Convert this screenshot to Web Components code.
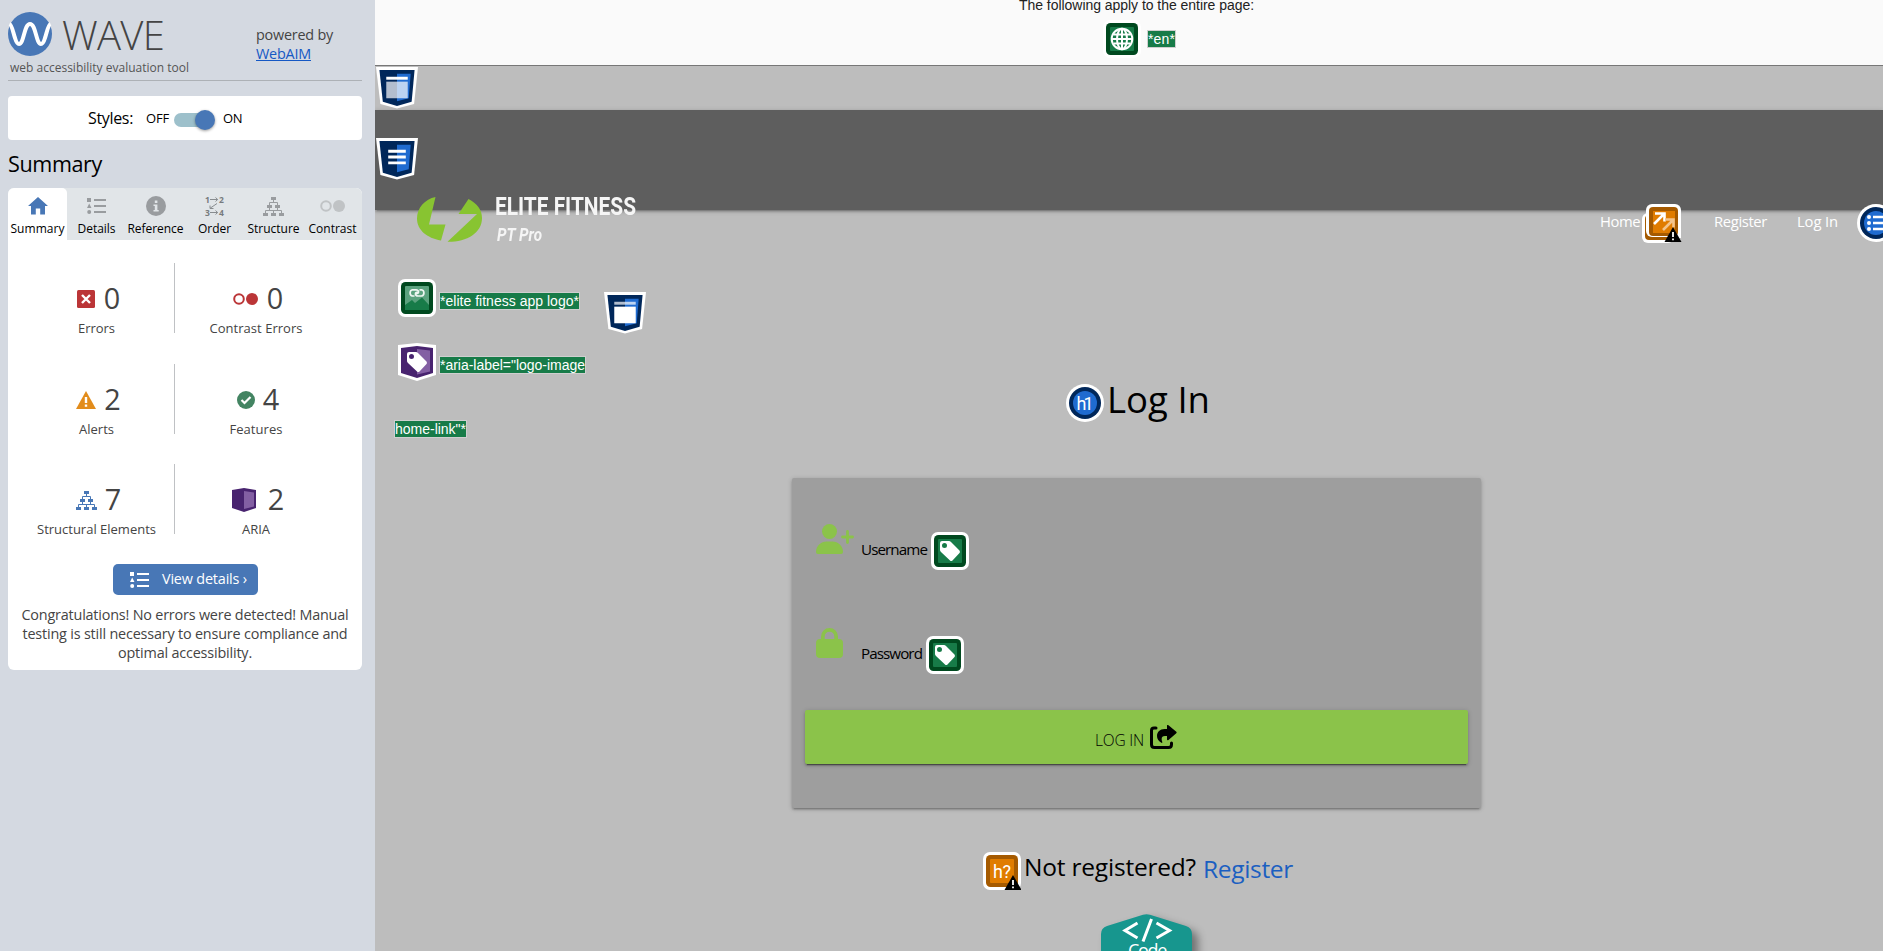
<!DOCTYPE html>
<html lang="en">
<head>
<meta charset="utf-8">
<title>WAVE Report</title>
<style>
html,body{margin:0;height:100%;overflow:hidden}
body{font-family:"Open Sans","Noto Sans",sans-serif;color:#000;background:#bdbdbd}
</style>
</head>
<body>
<wave-report></wave-report>
<script>
const define = (name, html) => customElements.define(name, class extends HTMLElement {
  constructor() {
    super();
    const t = document.createElement('template');
    t.innerHTML = html;
    this.attachShadow({mode: 'open'}).append(t.content.cloneNode(true));
  }
});

/* Icon set shared by the sidebar and the in-page markers */
const shield = inner => `<svg width="42" height="42" viewBox="0 0 43 43"><path fill="#fff" d="M0 0H43L39 38L21.5 42.5L4.500 38Z"/><path fill="#00275a" d="M3.500 3H39.500L36.500 35.500L21.500 40L7 35.500Z"/><path fill="#1f6bd0" d="M21.500 7H35.500L33.500 32L21.500 35Z"/>${inner}</svg>`;
const box = (dark, mid, inner) => `<svg width="38" height="38" viewBox="0 0 38 38"><rect width="38" height="38" rx="7" fill="#fff"/><rect x="3" y="3" width="32" height="32" rx="4.500" fill="${dark}"/><rect x="7" y="7" width="24" height="24" rx="1" fill="${mid}"/>${inner}</svg>`;
const tag = '<path fill="#fff" fill-rule="evenodd" d="M9 11Q9 9 11 9H18Q19 9 20 10L28.500 18.500Q29.500 20 28.500 21L21.500 28.500Q20 29.500 19 28.500L10 20Q9 19 9 18ZM13.500 11A2.500 2.500 0 1 0 13.500 16A2.500 2.500 0 1 0 13.500 11Z"/>';
const warn = '<path d="M30 23L38.500 38H21.500Z"/><path stroke="#fff" stroke-width="1.800" d="M30 28v5M30 34.500v1.800"/>';
const tree = c => `<svg width="21" height="19" viewBox="0 0 21 19"><path fill="${c}" d="M8 0h5v3H8zM4 8h5v3H4zM12 8h5v3h-5zM0 16h5v3H0zM8 16h5v3H8zM16 16h5v3h-5z"/><path stroke="${c}" fill="none" d="M10.500 3v3M6.500 8V5.500h8V8M6.500 11v2.500M14.500 11v2.500M2.500 16v-2.500h16V16M10.500 16v-2.500"/></svg>`;
const list = c => `<svg width="19" height="16" viewBox="0 0 19 16"><path fill="${c}" d="M0 0h4v4H0zM2.200 5.600l2.300 4.400H0zM7 1h12v2H7zM7 7h12v2H7zM7 13h12v2H7z"/><circle cx="2.200" cy="14" r="2" fill="${c}"/></svg>`;
const dots = c => `<svg width="25" height="12" viewBox="0 0 25 12"><circle cx="6" cy="6" r="4.800" fill="none" stroke="${c}" stroke-width="2"/><circle cx="19" cy="6" r="6" fill="${c}"/></svg>`;
const ICONS = {
  logo: `<svg width="44" height="44" viewBox="0 0 44 44"><circle cx="22" cy="22" r="22" fill="#4877b6"/><path fill="none" stroke="#fff" stroke-width="4" d="M1.500 12C4 13 5 20 7 26C8.500 31 9.500 32 11 32C16 32 16 12 22 12C28 12 28 32 33 32C34.500 32 35.500 31 37 26C39 20 40 13 42.500 12"/></svg>`,
  home: '<svg width="20" height="18" viewBox="0 0 20 18"><path fill="#4877b6" d="M10 0L20 9H17V17.500H12.200V11.500H7.800V17.500H3V9H0Z"/></svg>',
  list: list('#999c9f'), listw: list('#fff'),
  info: '<svg width="20" height="20" viewBox="0 0 20 20"><circle cx="10" cy="10" r="10" fill="#999c9f"/><path fill="#e1e5e8" d="M8.800 4.500h2.600V7H8.800zM7.500 8.500h3.900V14H12.700v1.500H7.500V14h1.300V10H7.500z"/></svg>',
  order: '<svg width="20" height="20" viewBox="0 0 20 20"><g font-family="Open Sans" font-size="8.500" font-weight="700" fill="#777b7e"><text x="0" y="6.500">1</text><text x="14" y="6.500">2</text><text x="0" y="19.500">3</text><text x="14" y="19.500">4</text></g><path fill="none" stroke="#888c8f" d="M5 3.500h7.500M10.500 1.500l2.200 2-2.200 2M5 16.500h7.500M10.500 14.500l2.200 2-2.200 2M12 7.500L5 12.300M5 9.500v3h3.500"/></svg>',
  tree: tree('#999c9f'), treeb: tree('#4877b6'),
  dots: dots('#c0c3c5'), dotsr: dots('#bb3537'),
  error: '<svg width="18" height="18" viewBox="0 0 18 18"><rect width="18" height="18" rx="1.500" fill="#bb3537"/><path stroke="#fff" stroke-width="2.400" d="M5 5l8 8M13 5l-8 8"/></svg>',
  alert: '<svg width="20" height="18" viewBox="0 0 20 18"><path fill="#e28c1b" d="M10 0L20 18H0Z"/><path stroke="#fff" stroke-width="2.400" d="M10 6v6M10 13.500v2.200"/></svg>',
  check: '<svg width="18" height="18" viewBox="0 0 18 18"><circle cx="9" cy="9" r="9" fill="#438462"/><path fill="none" stroke="#fff" stroke-width="2.200" d="M4.500 9l3 3 6-6"/></svg>',
  aria: '<svg width="24" height="24" viewBox="0 0 24 24"><path fill="#48236f" d="M0 2L12 0L24 2V20L12 24L0 20Z"/><path fill="#835fa3" d="M12 3L22 4.500V18.500L12 21Z"/></svg>',
  globe: box('#00491f', '#177b48', '<g fill="none" stroke="#fff" stroke-width="2"><circle cx="19" cy="19" r="10.300"/><ellipse cx="19" cy="19" rx="5" ry="10.300"/><path d="M19 9v20M9 19h20M10.500 14.500h17M10.500 23.500h17"/></g>'),
  main: shield('<path fill="#fff" d="M10.500 10h22v3h-22z"/><path fill="#fff" opacity=".7" d="M10.500 15h22v17h-22z"/>'),
  header: shield('<path fill="#fff" opacity=".7" d="M10.500 10h22v3h-22z"/><path fill="#fff" d="M10.500 15h22v17h-22z"/>'),
  nav: shield('<path fill="#fff" d="M12.500 12h18v3h-18zM12.500 18h18v3h-18zM12.500 24h18v3h-18z"/>'),
  image: box('#00491f', '#5ba27e', '<path fill="#177b48" d="M7 26L14 21L17 24L24 18.500L31 26V31H7Z"/><path fill="none" stroke="#fff" stroke-opacity=".9" stroke-width="1.700" d="M16.500 17H14.500A3.200 3.200 0 0 1 14.500 10.800H18C21.500 10.800 21.500 15.500 17.500 14.500M21.500 10.800H23.500A3.200 3.200 0 0 1 23.500 17H20C16.500 17 16.500 12.500 20.500 13.300"/>'),
  label: box('#00491f', '#177b48', tag),
  arialabel: `<svg width="38" height="38" viewBox="0 0 38 38"><path fill="#fff" d="M0 2L19 0L38 2V32L19 38L0 32Z"/><path fill="#48236f" d="M3 5L19 3L35 5V30L19 35L3 30Z"/><path fill="#835fa3" d="M19 6L32 7.500V28.500L19 31.500Z"/>${tag}</svg>`,
  redundant: `<svg width="40" height="39" viewBox="0 0 40 39"><rect y="9" width="32" height="30" rx="6" fill="#fff"/><rect x="3" y="11" width="30" height="25" rx="4" fill="#a55a00"/><rect x="4" width="35" height="33" rx="6" fill="#fff"/><rect x="7" y="3" width="29" height="29" rx="4" fill="#a55a00"/><rect x="11" y="7" width="22" height="22" fill="#e07c00"/><path fill="#fff" d="M33 20H39V34H33z"/><path fill="#a55a00" d="M30 14H36V28Q36 32 32 32H30z"/><path fill="#e07c00" d="M28 10H33V29H28z"/><path fill="none" stroke="#fff" stroke-width="2.600" d="M12 20L22 10M13 9.500h9.500v8"/><path fill="none" stroke="#f3c48c" stroke-width="2.600" d="M21 26L31 16M23 15.500h8.500v8"/><g transform="translate(1 0)">${warn}</g></svg>`,
  h1: '<svg width="38" height="38" viewBox="0 0 38 38"><circle cx="19" cy="19" r="19" fill="#fff"/><circle cx="19" cy="19" r="16" fill="#00275a"/><circle cx="19" cy="19" r="12" fill="#1f6bd0"/><text x="19" y="26" text-anchor="middle" font-family="Roboto" font-size="18" fill="#fff" textLength="17">h1</text></svg>',
  ul: '<svg width="38" height="38" viewBox="0 0 38 38"><circle cx="19" cy="19" r="19" fill="#fff"/><circle cx="19" cy="19" r="16" fill="#00275a"/><circle cx="19" cy="19" r="12" fill="#1f6bd0"/><path stroke="#fff" stroke-width="2.500" d="M16 13h14M16 19h14M16 25h14"/><g fill="#fff"><circle cx="12" cy="13" r="2"/><circle cx="12" cy="19" r="2"/><circle cx="12" cy="25" r="2"/></g></svg>',
  hq: box('#a55a00', '#e07c00', '<text x="19" y="26" text-anchor="middle" font-family="Roboto" font-size="18" fill="#fff" textLength="18">h?</text>' + warn),
  user: '<svg width="38" height="30" viewBox="0 0 38 30"><circle cx="13.500" cy="7.500" r="7.500" fill="#8bc34a"/><path fill="#8bc34a" d="M10.500 17.500H16.500C22 17.500 27 22 27 28Q27 30 25 30H2Q0 30 0 28C0 22 5 17.500 10.500 17.500Z"/><path stroke="#8bc34a" stroke-width="2.800" stroke-linecap="round" d="M26.500 13H36.500M31.500 7.500V18.500"/></svg>',
  lock: '<svg width="27" height="30" viewBox="0 0 27 30"><path fill="#8bc34a" fill-rule="evenodd" d="M5 11V8.500A8.500 8.500 0 0 1 22 8.500V11H23Q27 11 27 15V26Q27 30 23 30H4Q0 30 0 26V15Q0 11 4 11ZM8.700 11H18.300V8.500A4.800 4.800 0 0 0 8.700 8.500Z"/></svg>',
  share: '<svg width="27" height="24" viewBox="0 0 27 24"><path fill="none" stroke="#000" stroke-width="3" stroke-linecap="round" d="M6 3H4Q1.500 3 1.500 5.500V19.500Q1.500 22.500 4.500 22.500H18.500Q21.500 22.500 21.500 19.500V18"/><path d="M17 1Q17-.800 18.500.300L26.300 6.800Q27 7.500 26.300 8.200L18.500 15Q17 16 17 14.200V11H15C11.500 11 11 13.500 12.300 17Q12.500 18.500 11 17.500C8.500 16 7 13.800 7 11C7 7 10 4 14.500 4H17Z"/></svg>',
  elite: '<svg width="65" height="46" viewBox="0 0 65 46"><path fill="#88c431" d="M18.500 1L12 28.500H28.500L24 44.500C10 42 0 34 0 22.500C0 12 8 3 18.500 1ZM51.500 3C60 7.500 65 13.500 65 22C65 37 50 46 30.500 45.800L60 18H41.500Z"/></svg>',
  code: '<svg width="104" height="37" viewBox="0 0 104 37" style="overflow:visible;filter:drop-shadow(6px 5px 4px rgba(0,0,0,.4))"><path fill="#17968e" d="M42 .800Q45.500-.500 49 .800L85 12Q91 14 91 20V60H0V20Q0 14 6 12Z"/><path fill="none" stroke="#fff" stroke-width="3" d="M36.500 9L24 16.500L36.500 24M55.500 9L68.500 16.500L55.500 24M50.500 5L42 27.500"/></svg>'
};
customElements.define('wave-icon', class extends HTMLElement {
  static observedAttributes = ['name'];
  constructor() { super(); this.attachShadow({mode: 'open'}); }
  attributeChangedCallback(_, __, name) {
    this.shadowRoot.innerHTML = '<style>:host{display:block;flex:none}svg{display:block}</style>' + ICONS[name];
  }
});

define('wave-header', `<style>
:host{display:flex;height:80px;border-bottom:1px solid #adb1b6;color:#444}
.l{width:248px}.b{display:flex;gap:10px;padding-top:12px;height:44px}
.n{font-weight:300;font-size:40px;line-height:46px}
.t{display:block;font-size:12px;line-height:16px;margin:4px 0 0 2px;color:#555}
.r{font-size:14.400px;line-height:19px;padding-top:25px}
a{color:#1558c4}a fit-text{text-decoration:underline}
</style><div class="l"><div class="b"><wave-icon name="logo"></wave-icon><fit-text class="n" w="102">WAVE</fit-text></div><fit-text class="t" w="179">web accessibility evaluation tool</fit-text></div>
<div class="r"><fit-text w="77">powered by</fit-text><br><a><fit-text w="55">WebAIM</fit-text></a></div>`);

define('style-switch', `<style>
:host{display:flex;align-items:center;height:44px;background:#fff;border-radius:4px;margin-top:15px;font-size:13px;box-sizing:border-box;padding-left:80px}
.s{font-size:16px;margin-right:13px}
i{display:flex;justify-content:flex-end;align-items:center;width:31px;height:14px;border-radius:7px;background:#9dc0cb;margin:4px 18px 0 5px}
i::after{content:"";width:20px;height:20px;flex:none;border-radius:50%;background:#4877b6;margin-right:-10px;box-shadow:0 1px 3px rgba(0,0,0,.4)}
</style><fit-text class="s" w="45">Styles:</fit-text><fit-text w="23">OFF</fit-text><i></i><fit-text w="19">ON</fit-text>`);

customElements.define('wave-tab', class extends HTMLElement {
  constructor() {
    super();
    this.attachShadow({mode: 'open'}).innerHTML = `<style>
:host{display:flex;flex-direction:column;align-items:center;width:59px;height:52px;font-size:12px;line-height:16px}
:host([on]){background:#fff;border-radius:5px 5px 0 0}
.i{height:36px;display:flex;align-items:center}
fit-text{margin-top:-3px}
</style><div class="i"><wave-icon name="${this.getAttribute('icon')}"></wave-icon></div><fit-text w="${this.getAttribute('w')}"><slot></slot></fit-text>`;
  }
});

customElements.define('wave-stat', class extends HTMLElement {
  constructor() {
    super();
    const a = n => this.getAttribute(n);
    this.attachShadow({mode: 'open'}).innerHTML = `<style>
:host{display:flex;flex-direction:column;align-items:center;height:70px;color:#444;font-size:13px;line-height:18px;box-sizing:border-box}
:host([left]){border-right:1px solid #bfc1c4;padding-left:11px}
:host(:not([left])){padding-right:25px}
.r{display:flex;align-items:center;height:72px;flex:none;font-size:28.800px;line-height:40px;gap:${a('gap')}px;padding-left:4px}
b{font-weight:400;margin-top:-2px}fit-text{margin-top:-16px}
</style><div class="r"><wave-icon name="${a('icon')}"></wave-icon><b>${a('count')}</b></div><fit-text w="${a('w')}"><slot></slot></fit-text>`;
  }
});

define('wave-sidebar', `<style>
:host{display:block;width:375px;height:951px;background:#d4d9e1;box-sizing:border-box;padding:0 13px 0 8px}
h2{font-weight:400;font-size:21.600px;line-height:30px;margin:9px 0 9px}
.p{background:#fff;border-radius:6px;height:482px;overflow:hidden}
.tabs{display:flex;background:#e1e5e8;height:52px}
.g{display:grid;grid-template-columns:167px 187px;row-gap:30.500px;padding-top:23px}
.btn{display:flex;align-items:center;width:145px;height:31px;border-radius:5px;background:#4877b6;color:#fff;font-size:14.400px;box-sizing:border-box;padding-left:17px;gap:13px;margin:30px 0 0 105px}
.btn fit-text{margin-top:-2px}
p{margin:10px 0 0;text-align:center;font-size:14.400px;line-height:19px;color:#444}
</style><wave-header></wave-header><style-switch></style-switch>
<h2><fit-text w="94">Summary</fit-text></h2>
<div class="p"><div class="tabs">
<wave-tab on icon="home" w="54">Summary</wave-tab><wave-tab icon="list" w="38">Details</wave-tab><wave-tab icon="info" w="56">Reference</wave-tab><wave-tab icon="order" w="33">Order</wave-tab><wave-tab icon="tree" w="52">Structure</wave-tab><wave-tab icon="dots" w="48">Contrast</wave-tab></div>
<div class="g">
<wave-stat left icon="error" count="0" gap="9" w="37">Errors</wave-stat><wave-stat icon="dotsr" count="0" gap="9" w="93">Contrast Errors</wave-stat>
<wave-stat left icon="alert" count="2" gap="8" w="35">Alerts</wave-stat><wave-stat icon="check" count="4" gap="8" w="53">Features</wave-stat>
<wave-stat left icon="treeb" count="7" gap="8" w="119">Structural Elements</wave-stat><wave-stat icon="aria" count="2" gap="12" w="28">ARIA</wave-stat></div>
<div class="btn"><wave-icon name="listw"></wave-icon><fit-text w="85">View details ›</fit-text></div>
<p><fit-text w="327">Congratulations! No errors were detected! Manual</fit-text><br><fit-text w="325">testing is still necessary to ensure compliance and</fit-text><br><fit-text w="134">optimal accessibility.</fit-text></p></div>`);

define('alt-label', `<style>:host{display:inline-block;flex:none;background:#177b48;color:#fff;outline:1px solid #cfcfcf;outline-offset:0;font:14px/16px "Liberation Sans",Arial,sans-serif;white-space:nowrap}</style><slot></slot>`);

define('page-banner', `<style>
:host{display:block;height:65px;background:#fafafa;border-bottom:1px solid #777;overflow:hidden;font-family:"Liberation Sans",Arial,sans-serif}
.t{display:block;font-size:14px;line-height:20px;margin:-5px 0 0 644px;color:#222}
.r{display:flex;margin:5px 0 0 728px;gap:7px;align-items:center}
alt-label{margin-top:-1px}
</style><fit-text class="t" w="235">The following apply to the entire page:</fit-text><div class="r"><wave-icon name="globe"></wave-icon><alt-label><fit-text w="27">*en*</fit-text></alt-label></div>`);

define('site-brand', `<style>
:host{display:flex;color:#f5f5f5;font-family:Roboto,sans-serif;font-weight:700}
.c{display:flex;flex-direction:column;margin-left:13px}
.a{font-size:26.500px;line-height:26px;margin-top:-3px}
.b{font-size:19px;line-height:20px;margin:6px 0 0 2px;font-style:italic}
</style><wave-icon name="elite"></wave-icon><div class="c"><fit-text class="a" scale w="141">ELITE FITNESS</fit-text><fit-text class="b" scale w="45">PT Pro</fit-text></div>`);

define('site-nav', `<style>
:host{display:flex;height:100px;background:#5e5e5e;box-shadow:0 2px 2px rgba(0,0,0,.14),0 3px 1px -2px rgba(0,0,0,.12),0 1px 5px rgba(0,0,0,.2);color:#fff;position:relative}
.i{margin:28px 0 0 1px}site-brand{margin:86px 0 0 -1px}
.m{display:flex;margin:94px -12px 0 auto;align-items:flex-start;font-size:14.800px;line-height:20px}
.m fit-text{margin-top:7px}
</style><wave-icon class="i" name="nav"></wave-icon><site-brand></site-brand>
<div class="m"><fit-text w="40">Home</fit-text><wave-icon name="redundant" style="margin:0 32px 0 2px"></wave-icon><fit-text w="53">Register</fit-text><fit-text w="41" style="margin-left:30px;margin-right:19px">Log In</fit-text><wave-icon name="ul"></wave-icon></div>`);

define('alt-notes', `<style>
:host{display:block;padding:69px 0 0 20px}
div{display:flex;align-items:flex-start;padding-left:3px;gap:4px;height:38px}
alt-label{margin-top:14px}
.h{margin:13px 0 0 21px}
.x{margin-top:26px}.y{margin-top:40px;padding:0}.y alt-label{margin:0}
</style><div><wave-icon name="image"></wave-icon><alt-label><fit-text w="139">*elite fitness app logo*</fit-text></alt-label><wave-icon class="h" name="header"></wave-icon></div>
<div class="x"><wave-icon name="arialabel"></wave-icon><alt-label><fit-text w="145">*aria-label="logo-image</fit-text></alt-label></div>
<div class="y"><alt-label><fit-text w="71">home-link"*</fit-text></alt-label></div>`);

customElements.define('form-field', class extends HTMLElement {
  constructor() {
    super();
    this.attachShadow({mode: 'open'}).innerHTML = `<style>
:host{display:flex;height:46px;padding-left:24px;font-size:15.200px;line-height:20px}
.i{width:45px;flex:none}fit-text{margin:15px 4px 0 0}.t{margin-top:8px}
</style><div class="i"><wave-icon name="${this.getAttribute('icon')}"></wave-icon></div><fit-text w="${this.getAttribute('w')}"><slot></slot></fit-text><wave-icon class="t" name="label"></wave-icon>`;
  }
});

define('login-card', `<style>
:host{display:block;box-sizing:border-box;width:689px;height:330px;padding-top:46px;background:#9e9e9e;border-radius:2px;box-shadow:0 2px 2px rgba(0,0,0,.14),0 3px 1px -2px rgba(0,0,0,.12),0 1px 5px rgba(0,0,0,.2)}
form-field{margin-bottom:58px}
.b{display:flex;align-items:center;height:54px;width:663px;margin:-22px auto 0;border-radius:2px;background:#8bc34a;box-sizing:border-box;padding-left:290px;gap:6px;font-weight:300;font-size:15.500px;box-shadow:0 2px 2px rgba(0,0,0,.14),0 3px 1px -2px rgba(0,0,0,.4),0 1px 5px rgba(0,0,0,.2)}
.b fit-text{margin-top:6px}
</style><form-field icon="user" w="66">Username</form-field><form-field icon="lock" w="61">Password</form-field>
<div class="b"><fit-text w="49">LOG IN</fit-text><wave-icon name="share"></wave-icon></div>`);

define('login-view', `<style>
:host{display:block;padding-top:174px}
h1{display:flex;height:38px;gap:3px;margin:0 0 56px 274px;font-weight:400;font-size:36.500px;line-height:44px}
h1 fit-text{margin-top:-7px}
h3{display:flex;height:38px;gap:3px;margin:44px 0 24px 191px;font-weight:400;font-size:24.500px;line-height:34px}
h3 fit-text{margin-top:-2px}
a{color:#1b5fc1;margin-left:4px}
.c{display:grid;margin-left:309px;width:91px}
.c>*{grid-area:1/1}.c fit-text{color:#fff;font-size:18px;line-height:20px;margin:26px 0 0 27px;position:relative}
</style><h1><wave-icon name="h1"></wave-icon><fit-text w="103">Log In</fit-text></h1><login-card></login-card>
<h3><wave-icon name="hq"></wave-icon><fit-text w="172">Not registered?</fit-text><a><fit-text w="90">Register</fit-text></a></h3>
<div class="c"><wave-icon name="code"></wave-icon><fit-text w="38">Code</fit-text></div>`);

define('page-view', `<style>
:host{display:block;width:1508px;height:951px;overflow:hidden;background:#bdbdbd}
.s{height:43px;padding:1px 0 0 1px}
.g{display:grid;grid-template-columns:417px 689px 1fr}
</style><page-banner></page-banner><div class="s"><wave-icon name="main"></wave-icon></div><site-nav></site-nav><div class="g"><alt-notes></alt-notes><login-view></login-view></div>`);

define('wave-report', `<style>:host{display:flex;width:1883px;height:951px;overflow:hidden}</style><wave-sidebar></wave-sidebar><page-view></page-view>`);

/* Text run set to a given width, by tracking or (with "scale") by condensing */
customElements.define('fit-text', class extends HTMLElement {
  constructor() {
    super();
    this.attachShadow({mode: 'open'}).innerHTML = '<style>:host{display:inline-block;flex:none;white-space:nowrap}span{display:inline-block;transform-origin:0 50%;text-decoration:inherit}</style><span><slot></slot></span>';
  }
  connectedCallback() {
    const s = this.shadowRoot.querySelector('span'), w = +this.getAttribute('w');
    const n = this.textContent.trim() || this.querySelector('slot').assignedNodes().map(x => x.textContent).join('');
    const now = s.getBoundingClientRect().width;
    if (!w || !now) return;
    this.style.width = w + 'px';
    if (this.hasAttribute('scale')) s.style.transform = `scaleX(${w / now})`;
    else s.style.letterSpacing = (w - now) / n.length + 'px';
  }
});
</script>
</body>
</html>
